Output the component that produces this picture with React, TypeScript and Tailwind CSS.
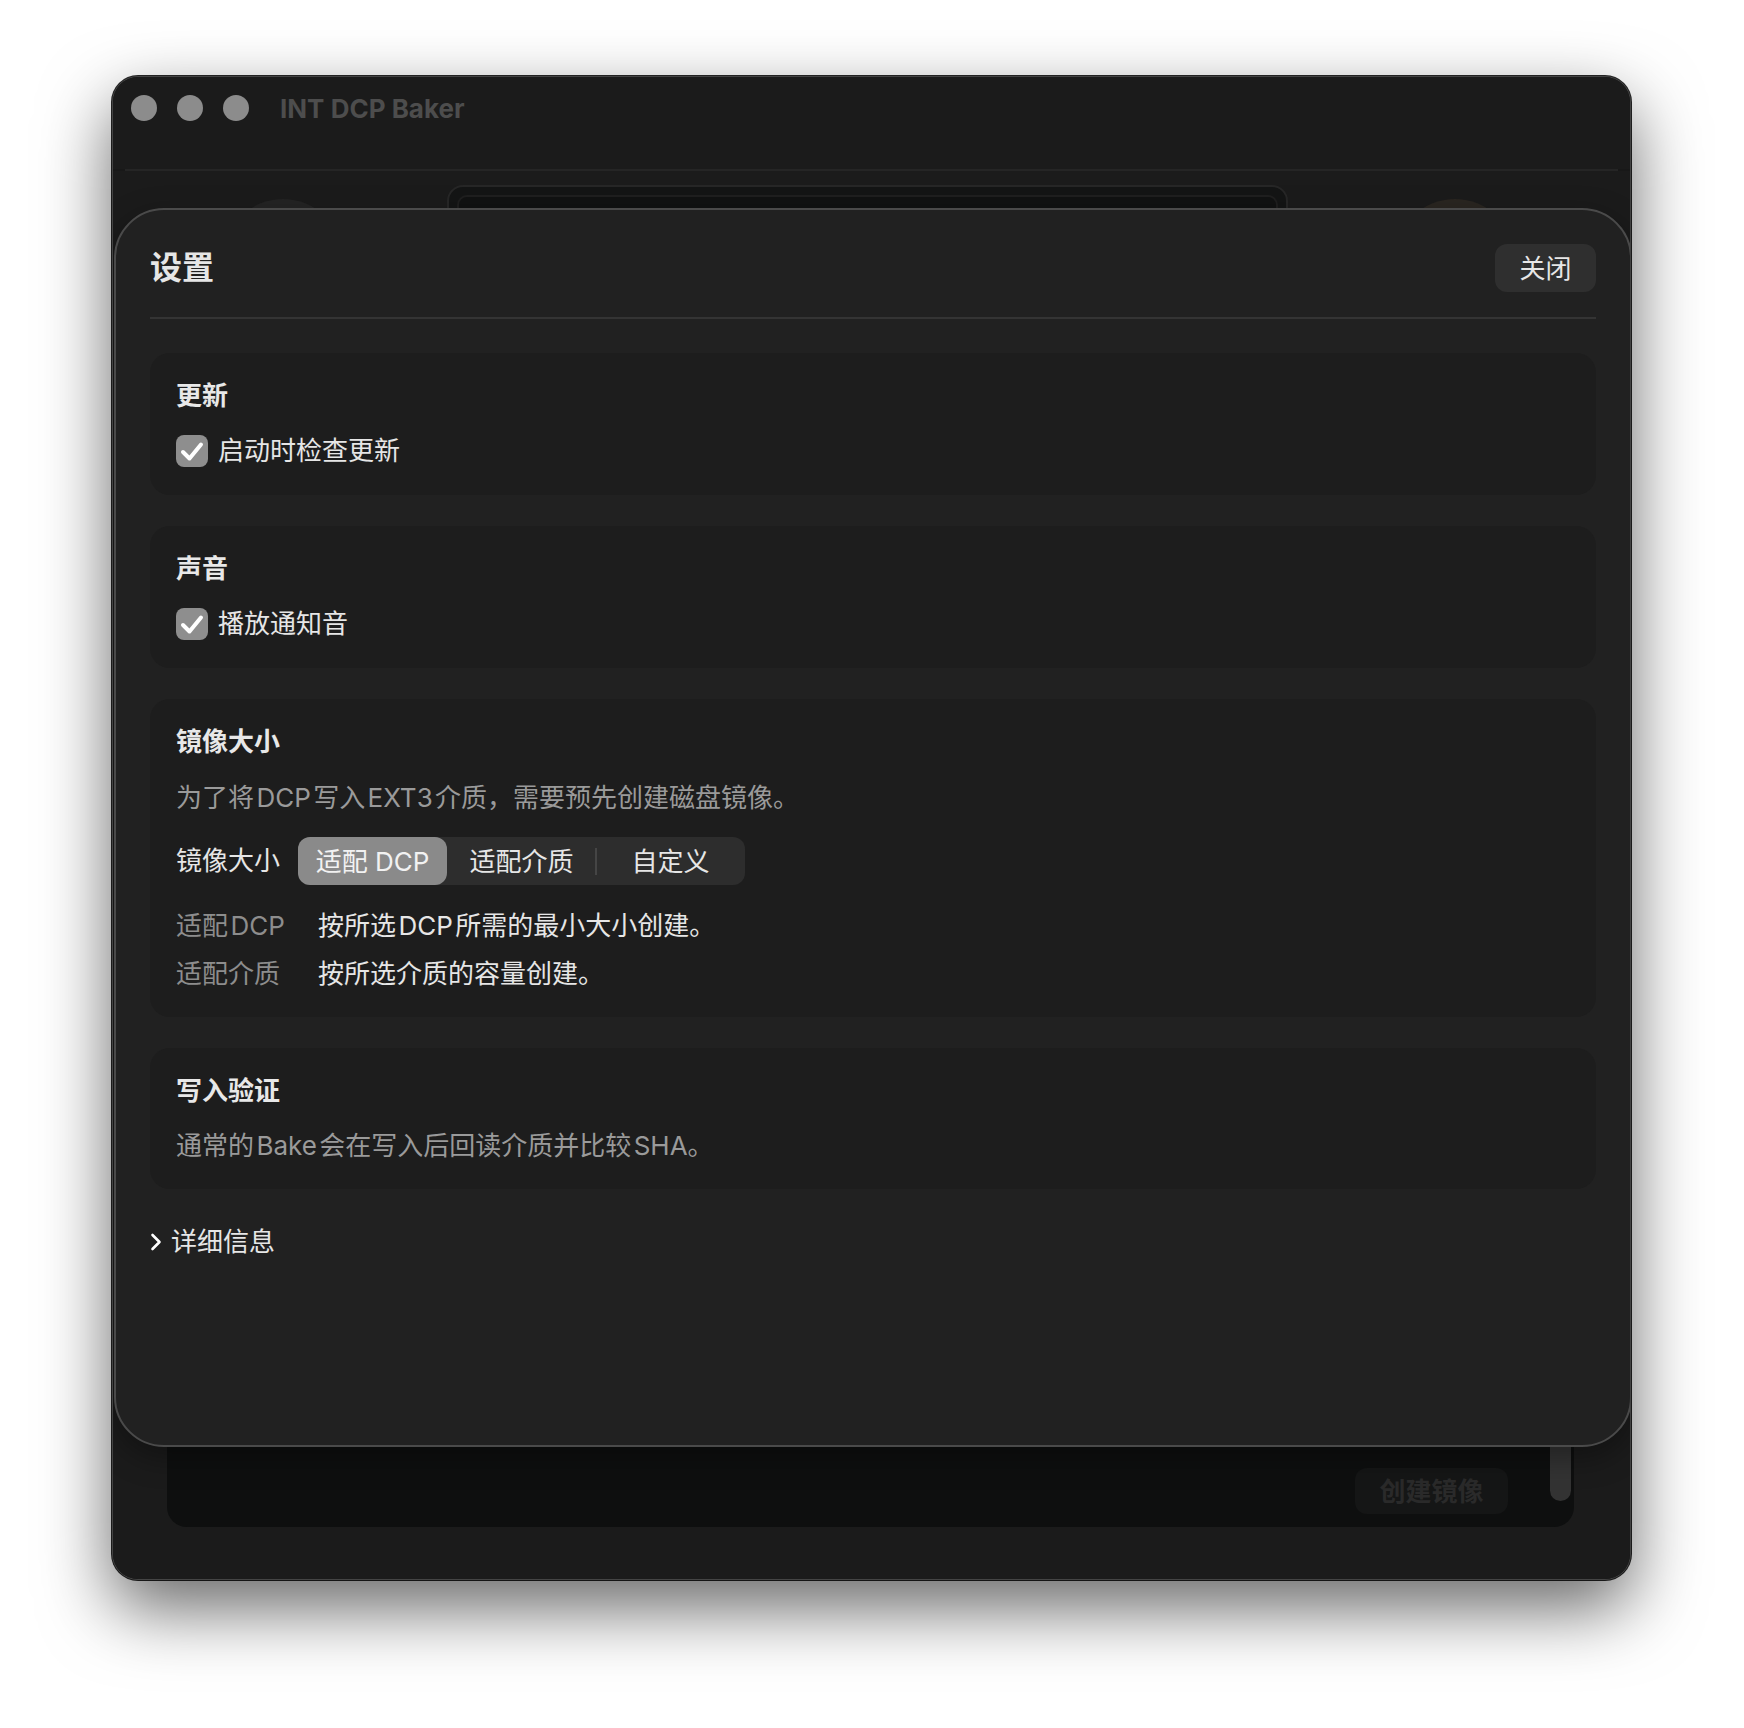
import React from 'react';

const Check: React.FC<{ label: string }> = ({ label }) => (
  <div className="flex items-center h-[32px]">
    <div className="w-[32px] h-[32px] rounded-[8px] bg-[#8e8e8e] flex items-center justify-center shrink-0">
      <svg width="32" height="32" viewBox="0 0 32 32" fill="none">
        <path d="M7 17 L13.5 23.5 L25 9.5" stroke="#ffffff" strokeWidth="4" strokeLinecap="round" strokeLinejoin="round" />
      </svg>
    </div>
    <span className="ml-[10px] text-[26px] leading-[30px] text-[#e6e6e6]">{label}</span>
  </div>
);

const Card: React.FC<{ title: string; children: React.ReactNode }> = ({ title, children }) => (
  <section className="rounded-[20px] bg-[#1d1d1d] px-[26px] pt-[28px] pb-[28px]">
    <h3 className="text-[26px] leading-[30px] font-bold text-[#e8e8e8]">{title}</h3>
    {children}
  </section>
);

const App: React.FC = () => {
  const segments = ['适配 DCP', '适配介质', '自定义'];

  return (
    <div className="min-h-screen bg-white pt-[76px] pl-[112px] font-['Inter','Noto_Sans_CJK_SC',sans-serif]">
      {/* Window */}
      <div className="relative w-[1519px] h-[1504px] rounded-[26px] bg-[#181818] border-[1.5px] border-[#444444] flex flex-col overflow-hidden shadow-[0_0_0_1px_rgba(0,0,0,0.85),0_28px_70px_rgba(0,0,0,0.6)]">
        {/* Title bar */}
        <div className="h-[92px] shrink-0 bg-[#1b1b1b] flex items-start pt-[18px] pl-[18px]">
          <div className="flex gap-[20px]">
            <div className="w-[26px] h-[26px] rounded-full bg-[#8c8c8c]" />
            <div className="w-[26px] h-[26px] rounded-full bg-[#8c8c8c]" />
            <div className="w-[26px] h-[26px] rounded-full bg-[#8c8c8c]" />
          </div>
          <span className="ml-[31px] mt-[1px] text-[26px] leading-[26px] font-bold text-[#4d4d4d]">INT DCP Baker</span>
        </div>
        <div className="mx-[12px] h-[2px] bg-[#252525] shrink-0" />

        {/* Main content (behind the sheet) */}
        <div className="flex-1 flex flex-col justify-between bg-[#1b1b1b]">
          <div className="flex items-start pt-[14px]">
            <div className="ml-[110px] mt-[14px] w-[120px] h-[120px] rounded-full bg-[#242424]" />
            <div className="ml-[104px] w-[841px] h-[120px] rounded-[16px] border-2 border-[#272727] bg-[#141515] p-[8px]">
              <div className="w-full h-full rounded-[10px] border-2 border-[#1f1f1f] bg-[#111212]" />
            </div>
            <div className="ml-[107px] mt-[14px] w-[120px] h-[120px] rounded-full bg-[#2a2621]" />
          </div>
          <div className="ml-[54px] mr-[56px] mb-[52px] h-[260px] rounded-[20px] bg-[#0e0f0f] flex items-end justify-end">
            <div className="mb-[13px] w-[153px] h-[46px] rounded-[12px] bg-[#151616] flex items-center justify-center text-[26px] font-bold text-[#2a2a2a]">
              创建镜像
            </div>
            <div className="ml-[42px] mr-[3px] mb-[26px] w-[21px] h-[120px] rounded-full bg-[#333333]" />
          </div>
        </div>

        {/* Settings sheet */}
        <div className="absolute left-[1px] top-[131px] w-[1518px] h-[1239px] rounded-[50px] bg-[#212121] border-2 border-[#4a4a4a] px-[34px] pt-[34px] shadow-[0_10px_30px_rgba(0,0,0,0.35)]">
          <div className="flex items-center justify-between h-[48px]">
            <h2 className="text-[32px] leading-[36px] font-bold text-[#e6e6e6]">设置</h2>
            <button className="w-[101px] h-[48px] rounded-[12px] bg-[#2f2f2f] text-[26px] text-[#e6e6e6] flex items-center justify-center">
              关闭
            </button>
          </div>
          <div className="mt-[25px] h-[2px] bg-[#343434]" />

          <div className="mt-[34px] flex flex-col gap-[31px]">
            <Card title="更新">
              <div className="mt-[24px]">
                <Check label="启动时检查更新" />
              </div>
            </Card>

            <Card title="声音">
              <div className="mt-[24px]">
                <Check label="播放通知音" />
              </div>
            </Card>

            <Card title="镜像大小">
              <p className="mt-[26px] text-[26px] leading-[30px] text-[#9a9a9a]">
                为了将{'\u200A'}DCP{'\u200A'}写入{'\u200A'}EXT3{'\u200A'}介质，需要预先创建磁盘镜像。
              </p>
              <div className="mt-[24px] flex items-center">
                <span className="text-[26px] leading-[30px] text-[#e6e6e6]">镜像大小</span>
                <div className="ml-[18px] h-[48px] w-[447px] rounded-[12px] bg-[#2d2d2d] flex items-center">
                  {segments.map((s, i) => (
                    <React.Fragment key={s}>
                      {i === 2 && <div className="w-[2px] h-[27px] bg-[#454545] -ml-[1px] -mr-[1px]" />}
                      <div
                        className={
                          i === 0
                            ? 'w-[149px] h-[48px] rounded-[12px] bg-[#8a8a8a] flex items-center justify-center text-[26px] text-[#f2f2f2]'
                            : 'w-[149px] h-[48px] flex items-center justify-center text-[26px] text-[#e6e6e6]'
                        }
                      >
                        {s}
                      </div>
                    </React.Fragment>
                  ))}
                </div>
              </div>
              <div className="mt-[26px] grid grid-cols-[142px_1fr] gap-y-[18px] text-[26px] leading-[30px]">
                <span className="text-[#8d8d8d]">适配{'\u200A'}DCP</span>
                <span className="text-[#e6e6e6]">按所选{'\u200A'}DCP{'\u200A'}所需的最小大小创建。</span>
                <span className="text-[#8d8d8d]">适配介质</span>
                <span className="text-[#e6e6e6]">按所选介质的容量创建。</span>
              </div>
            </Card>

            <Card title="写入验证">
              <p className="mt-[25px] text-[26px] leading-[30px] text-[#9a9a9a]">
                通常的{'\u200A'}Bake{'\u200A'}会在写入后回读介质并比较{'\u200A'}SHA。
              </p>
            </Card>
          </div>

          <div className="mt-[38px] flex items-center h-[30px]">
            <svg width="12" height="18" viewBox="0 0 12 18" fill="none">
              <path d="M2.5 2 L9.5 9 L2.5 16" stroke="#ffffff" strokeWidth="2.6" strokeLinecap="round" strokeLinejoin="round" />
            </svg>
            <span className="ml-[9px] text-[26px] leading-[30px] text-[#e6e6e6]">详细信息</span>
          </div>
        </div>
      </div>
    </div>
  );
};

export default App;
